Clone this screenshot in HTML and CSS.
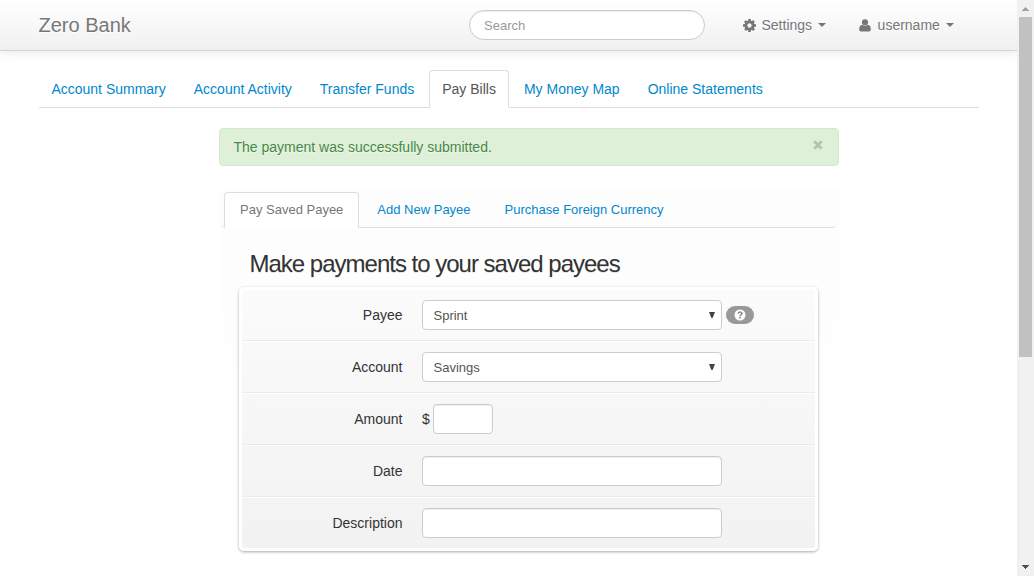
FILE: index.html
```
<!DOCTYPE html>
<html lang="en">
<head>
<meta charset="utf-8">
<title>Zero Bank - Pay Bills</title>
<link rel="stylesheet" href="styles.css">
</head>
<body>
<div class="page">
  <header class="navbar">
    <a class="brand">Zero Bank</a>
    <input class="search" type="text" placeholder="Search">
    <a class="menu menu-settings">
      <svg width="13" height="13" viewBox="0 0 1536 1536"><path fill="#777" fill-rule="evenodd" d="M1024 768q0-106-75-181t-181-75-181 75-75 181 75 181 181 75 181-75 75-181zm512-109v222q0 12-8 23t-20 13l-185 28q-19 54-39 91 35 50 107 138 10 12 10 25t-9 23q-27 37-99 108t-94 71q-12 0-26-9l-138-108q-44 23-91 38-16 136-29 186-7 28-36 28H657q-14 0-24.500-8.500T621 1506l-28-184q-49-16-90-37l-141 107q-10 9-25 9-14 0-25-11-126-114-165-168-7-10-7-23 0-12 8-23 15-21 51-66.500t54-70.500q-27-50-41-99L29 913q-13-2-21-12.500T0 877V655q0-12 8-23t19-13l186-28q14-46 39-92-40-57-107-138-10-12-10-24 0-10 9-23 26-36 98.500-107.500T337 135q13 0 26 10l138 107q44-23 91-38 16-136 29-186 7-28 36-28h222q14 0 24.500 8.500T915 30l28 184q49 16 90 37l142-107q9-9 24-9 13 0 25 10 129 119 165 170 7 8 7 22 0 12-8 23-15 21-51 66.500t-54 70.500q26 50 41 98l183 28q13 2 21 12.500t8 23.500z"/></svg>
      <span>Settings</span><i class="caret"></i>
    </a>
    <a class="menu menu-user">
      <svg width="12" height="13" viewBox="0 0 12 13"><g fill="#777"><circle cx="6" cy="3.300" r="3.100"/><path d="M3.200 5.800C1 6 .2 8.300.2 10.200c0 1.400.9 2.300 2.100 2.300h7.400c1.200 0 2.100-.9 2.100-2.300 0-1.900-.8-4.200-3-4.400C7.400 7.300 4.600 7.300 3.200 5.800z"/></g></svg>
      <span>username</span><i class="caret"></i>
    </a>
  </header>

  <nav class="tabs">
    <a>Account Summary</a>
    <a>Account Activity</a>
    <a>Transfer Funds</a>
    <a class="active">Pay Bills</a>
    <a>My Money Map</a>
    <a>Online Statements</a>
  </nav>

  <main class="content">
    <div class="alert">
      <span>The payment was successfully submitted.</span>
      <svg class="close" width="10" height="10" viewBox="0 0 10 10"><path d="M1.300 1.300l7.400 7.400M8.700 1.300L1.300 8.700" stroke="#b3c1af" stroke-width="2.700"/></svg>
    </div>

    <section class="panel">
      <nav class="subtabs">
        <a class="active">Pay Saved Payee</a>
        <a>Add New Payee</a>
        <a>Purchase Foreign Currency</a>
      </nav>
      <h2>Make payments to your saved payees</h2>
      <form class="board">
        <div class="row">
          <label>Payee</label>
          <div class="field select"><span>Sprint</span><svg width="6" height="6" viewBox="0 0 6 6"><path fill="#444" d="M0 0h6L3.600 6H2.400z"/></svg></div>
          <span class="help"><svg width="12" height="12" viewBox="0 0 12 12"><circle cx="6" cy="6" r="5.500" fill="#fff"/><path d="M4.200 4.700C4.200 2.500 7.900 2.500 7.900 4.500c0 1.300-1.900 1.400-1.900 2.700" fill="none" stroke="#888" stroke-width="1.500"/><path fill="#888" d="M5.200 8h1.600v1.500H5.200z"/></svg></span>
        </div>
        <div class="row">
          <label>Account</label>
          <div class="field select"><span>Savings</span><svg width="6" height="6" viewBox="0 0 6 6"><path fill="#444" d="M0 0h6L3.600 6H2.400z"/></svg></div>
        </div>
        <div class="row">
          <label>Amount</label>
          <span class="currency">$</span>
          <input class="field amount" type="text">
        </div>
        <div class="row">
          <label>Date</label>
          <input class="field" type="text">
        </div>
        <div class="row">
          <label>Description</label>
          <input class="field" type="text">
        </div>
      </form>
    </section>
  </main>
</div>
<aside class="scrollbar">
  <svg width="17" height="17" viewBox="0 0 17 17" shape-rendering="crispEdges"><path fill="#a3a3a3" d="M8 7h1v1h1v1h1v1h1v1H5v-1h1V9h1V8h1z"/></svg>
  <div class="thumb"></div>
  <svg width="17" height="17" viewBox="0 0 17 17" shape-rendering="crispEdges"><path fill="#505050" d="M5 6h7v1h-1v1h-1v1H9v1H8V9H7V8H6V7H5z"/></svg>
</aside>
</body>
</html>
```
FILE: styles.css
```
* { box-sizing: border-box; }

body {
  margin: 0;
  display: flex;
  width: 1034px;
  height: 576px;
  overflow: hidden;
  background: #fff;
  font: 14px/20px "Liberation Sans", Arial, sans-serif;
  color: #333;
}

.page { width: 1017px; }

.navbar {
  display: flex;
  align-items: center;
  height: 51px;
  padding-left: 38.5px;
  border-bottom: 1px solid #d4d4d4;
  background: linear-gradient(#fff, #f0f0f0);
  box-shadow: 0 1px 10px rgba(0, 0, 0, .1);
  color: #777;
  text-shadow: 0 1px 0 #fff;
}

.brand { width: 430.5px; font-size: 20px; }

.search {
  width: 236px;
  height: 30px;
  padding: 4px 14px;
  border: 1px solid #ccc;
  border-radius: 15px;
  background: #fff;
  box-shadow: inset 0 1px 1px rgba(0, 0, 0, .075);
  font: 13px/20px "Liberation Sans", Arial, sans-serif;
}

.search::placeholder { color: #999; }

.menu { display: flex; align-items: center; }
.menu-settings { margin-left: 37.5px; }
.menu-user { margin-left: 32.5px; }
.menu span { margin-left: 6px; }
.menu-user svg { margin-right: 1px; }

.caret {
  margin-left: 6px;
  border: 4px solid transparent;
  border-top-color: #777;
  border-bottom: 0;
}

.tabs {
  display: flex;
  gap: 2px;
  width: 940px;
  height: 38px;
  margin: 19px 0 0 39px;
  border-bottom: 1px solid #ddd;
  color: #08c;
}

.tabs a {
  height: 38px;
  padding: 8px 12px;
  border: 1px solid transparent;
  border-radius: 4px 4px 0 0;
}

.tabs a:first-child { margin-left: -.6px; }

.tabs .active, .subtabs .active {
  border-color: #ddd;
  border-bottom-color: #fff;
  background: #fff;
  color: #555;
}

.content { width: 620px; margin: 20px 0 0 219px; }

.alert {
  display: flex;
  justify-content: space-between;
  height: 38px;
  padding: 8px 15.5px 8px 13.5px;
  border: 1px solid #d6e9c6;
  border-radius: 4px;
  background: #dff0d8;
  color: #468847;
  text-shadow: 0 1px 0 rgba(255, 255, 255, .5);
}

.close { margin-top: 3px; }

.panel {
  height: 386px;
  margin-top: 24px;
  padding-top: 2px;
  background: linear-gradient(#fdfdfd, #fff 330px);
}

.subtabs {
  display: flex;
  gap: 2px;
  height: 36px;
  margin: 0 3px;
  padding-left: 2px;
  border-bottom: 1px solid #ddd;
  border-radius: 4px;
  font-size: 13px;
  color: #08c;
}

.subtabs a {
  height: 36px;
  padding: 7px 15px;
  border: 1px solid transparent;
  border-radius: 4px 4px 0 0;
}

.subtabs .active { color: #777; }

h2 {
  height: 59px;
  margin: 0;
  padding: 16px 0 0 30.5px;
  font-size: 24px;
  line-height: 40px;
  font-weight: normal;
  letter-spacing: -1px;
  text-shadow: 0 1px 0 rgba(0, 0, 0, .1);
}

.board {
  width: 579px;
  height: 264px;
  margin-left: 20px;
  border: 3px solid #fff;
  border-radius: 5px;
  background: linear-gradient(#fbfbfb, #f2f2f2) padding-box;
  box-shadow: 0 1px 3px rgba(0, 0, 0, .35);
}

.row {
  display: flex;
  align-items: center;
  height: 52px;
  border-top: 1px solid #fff;
  border-bottom: 1px solid #eaeaea;
}

.row:first-child { height: 51px; border-top: 0; }
.row:last-child { height: 51px; border-bottom: 0; }

.row label { width: 160.5px; margin-right: 19.5px; text-align: right; }

.field {
  width: 300px;
  height: 30px;
  padding: 4px 6px;
  border: 1px solid #ccc;
  border-radius: 4px;
  background: #fff;
  box-shadow: inset 0 1px 1px rgba(0, 0, 0, .075);
}

.select {
  display: flex;
  align-items: center;
  justify-content: space-between;
  padding: 4px 6px 4px 10.5px;
  box-shadow: none;
  font-size: 13px;
  color: #555;
}

.select span { padding-top: 1px; }
.select svg { margin-bottom: 1px; }

.currency { width: 11px; }
.amount { width: 60px; }

.help {
  display: flex;
  align-items: center;
  justify-content: center;
  width: 28px;
  height: 18px;
  margin-left: 4px;
  border-radius: 9px;
  background: #999;
}

.scrollbar {
  display: flex;
  flex-direction: column;
  width: 17px;
  height: 576px;
  background: #f1f1f1;
}

.scrollbar svg:last-child { margin-top: auto; }
.thumb { width: 13px; height: 340px; margin-left: 2px; background: #c1c1c1; }
```
